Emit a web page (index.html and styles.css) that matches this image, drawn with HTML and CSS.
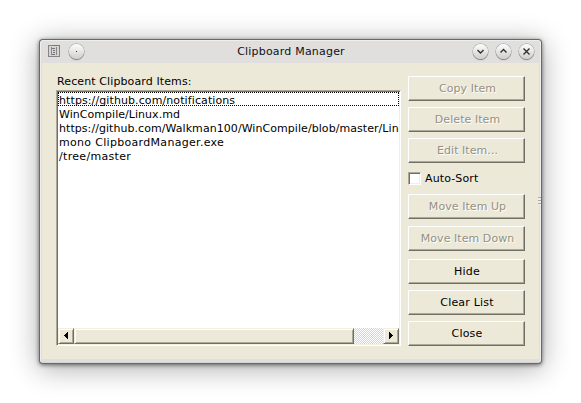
FILE: index.html
```html
<!DOCTYPE html>
<html lang="en">
<head>
<meta charset="utf-8">
<title>Clipboard Manager</title>
<link rel="stylesheet" href="styles.css">
</head>
<body>
<main class="window">
  <header class="titlebar">
    <svg class="app-icon" width="12" height="12" viewBox="0 0 12 12" shape-rendering="crispEdges"><path d="M.5 .5h11v11H.5z" fill="#d6d5d4" stroke="#858488"/><path d="M5 .5h6.500V4" fill="none" stroke="#77769a"/><path d="M3.500 2v8M8.500 2v8" fill="none" stroke="#8a8889"/><path d="M4 3.500h3M5 5.500h2M5 7.500h2M4 9.500h3" fill="none" stroke="#777577"/></svg>
    <span class="round pin"><i></i></span>
    <h1 class="title">Clipboard Manager</h1>
    <span class="round"><svg width="15" height="15" viewBox="0 0 15 15"><path d="M4.500 6l3 3 3-3"/></svg></span>
    <span class="round"><svg width="15" height="15" viewBox="0 0 15 15"><path d="M4.500 8.500l3-3 3 3"/></svg></span>
    <span class="round"><svg width="15" height="15" viewBox="0 0 15 15"><path d="M4.500 4.500l6 6M10.500 4.500l-6 6"/></svg></span>
  </header>
  <div class="client">
    <section class="left">
      <div class="label">Recent Clipboard Items:</div>
      <div class="listbox">
        <ul class="items">
          <li class="focused">https://github.com/notifications</li>
          <li class="tight">WinCompile/Linux.md</li>
          <li class="long">https://github.com/Walkman100/WinCompile/blob/master/Lin</li>
          <li class="loose">mono ClipboardManager.exe</li>
          <li class="loose">/tree/master</li>
        </ul>
        <div class="scrollbar">
          <span class="raised arrow"><svg width="4" height="8" viewBox="0 0 4 8" shape-rendering="crispEdges"><path d="M4 0v7H3V6H2V5H1V4H0V3h1V2h1V1h1V0z"/></svg></span>
          <span class="raised thumb"></span>
          <span class="track"></span>
          <span class="raised arrow"><svg width="4" height="8" viewBox="0 0 4 8" shape-rendering="crispEdges"><path d="M0 0v7h1V6h1V5h1V4h1V3H3V2H2V1H1V0z"/></svg></span>
        </div>
      </div>
    </section>
    <section class="actions">
      <button class="btn" disabled>Copy Item</button>
      <button class="btn" disabled>Delete Item</button>
      <button class="btn" disabled>Edit Item...</button>
      <div class="check"><span class="box"></span><span>Auto-Sort</span></div>
      <button class="btn" disabled>Move Item Up</button>
      <button class="btn down" disabled>Move Item Down</button>
      <button class="btn hide">Hide</button>
      <button class="btn">Clear List</button>
      <button class="btn">Close</button>
    </section>
    <span class="grip"></span>
  </div>
</main>
</body>
</html>
```
FILE: styles.css
```css
* { box-sizing: border-box; }
body {
  margin: 0;
  padding: 40px;
  height: 403px;
  overflow: hidden;
  background: #fff;
  font: 11px/14px "DejaVu Sans", sans-serif;
  color: #000;
}
.window {
  width: 501px;
  height: 323px;
  border-radius: 3px;
  background: #e0dfde;
  border: 1px solid #eeeeed;
  border-bottom-color: #d4d5d2;
  padding: 0 1px;
  box-shadow: 0 0 0 1px #686a6a, 0 1px 4px 1px rgba(0,0,0,.55), 0 4px 28px 2px rgba(0,0,0,.32);
}
.titlebar {
  height: 22px;
  display: flex;
  align-items: center;
  padding: 0 5px 2px 6px;
}
.app-icon { display: block; margin-top: -1px; }
.round {
  width: 15px;
  height: 15px;
  margin-left: 8px;
  border-radius: 50%;
  background: linear-gradient(#fdfdfd, #cfcecd);
  box-shadow: 0 0 0 .5px #969594, 0 1px 1px #777;
  display: flex;
  align-items: center;
  justify-content: center;
}
.round path { fill: none; stroke: #303030; stroke-width: 1.4; }
.pin { margin-left: 9px; }
.pin i { width: 1px; height: 1px; background: #333; }
.title {
  flex: 1;
  margin: 2px 0 0;
  padding-left: 33px;
  font: 11px/14px "DejaVu Sans", sans-serif;
  letter-spacing: .2px;
  text-align: center;
  color: #111;
}
.client {
  height: 296px;
  background: #ece9d8;
  padding: 13px 14px 0;
  display: flex;
  gap: 7px;
  position: relative;
}
.left { width: 345px; }
.label { height: 14px; padding-left: 1px; line-height: 12px; letter-spacing: .11px; }
.listbox {
  height: 256px;
  background: #fff;
  border: 1px solid;
  border-color: #aca899 #fff #fff #aca899;
  box-shadow: inset 1px 1px #716f64, inset -1px -1px #f1efe2;
  padding: 1px;
  display: flex;
  flex-direction: column;
}
.items { list-style: none; margin: 0; padding: 0; flex: 1; overflow: hidden; }
.items li { height: 14px; line-height: 14px; padding: 2px 0 0 1px; white-space: nowrap; letter-spacing: .1px; }
.items .focused { outline: 1px dotted #000; outline-offset: -1px; overflow: hidden; }
.items .tight { letter-spacing: .04px; }
.items .long { letter-spacing: .06px; }
.items .loose { letter-spacing: .31px; }
.scrollbar { display: flex; height: 16px; }
.raised {
  background: #ece9d8;
  border: 1px solid;
  border-color: #f1efe2 #716f64 #716f64 #f1efe2;
  box-shadow: inset 1px 1px #fff, inset -1px -1px #aca899;
}
.arrow { width: 16px; display: flex; align-items: center; justify-content: center; }
.thumb { width: 280px; }
.track { flex: 1; background: repeating-conic-gradient(#d8d4c4 0 25%, #fff 0 50%) 0 0 / 2px 2px; }
.actions { width: 117px; display: flex; flex-direction: column; }
.btn {
  height: 25px;
  margin: 0 0 6px;
  padding: 0;
  flex: none;
  background: #ece9d8;
  border: 1px solid;
  border-color: #fff #716f64 #716f64 #fff;
  box-shadow: inset -1px -1px #aca899;
  font: 11px/14px "DejaVu Sans", sans-serif;
  letter-spacing: .2px;
  padding-left: 1px;
  color: #000;
}
.btn:disabled { color: #949084; text-shadow: 1px 1px #fff; letter-spacing: .06px; padding-left: 2px; }
.check { height: 13px; margin: 3px 0 9px; display: flex; align-items: center; gap: 4px; letter-spacing: .13px; }
.box {
  width: 13px;
  height: 13px;
  background: #fff;
  border: 1px solid;
  border-color: #aca899 #fff #fff #aca899;
  box-shadow: inset 1px 1px #716f64, inset -1px -1px #f1efe2;
}
.down { margin-top: 1px; }
.hide { margin-top: 2px; }
.grip {
  position: absolute;
  right: -2px;
  top: 134px;
  width: 3px;
  height: 8px;
  background: repeating-linear-gradient(#aaa 0 1px, #eee 1px 3px);
}
```
